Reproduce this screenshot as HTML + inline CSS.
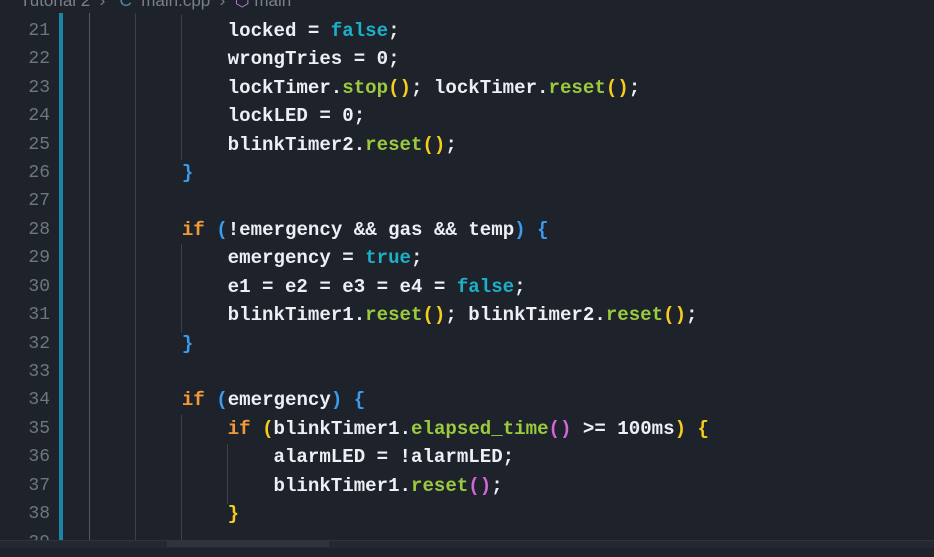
<!DOCTYPE html>
<html><head><meta charset="utf-8"><style>
body{margin:0;width:934px;height:547px;background:#1e222a;overflow:hidden;position:relative;font-family:"Liberation Mono",monospace;}
.ln{position:absolute;left:0;width:50px;text-align:right;color:#6e7681;font-size:18px;height:28.43px;line-height:28.43px;}
.c{position:absolute;left:136px;white-space:pre;color:#eceff4;font-size:19.1px;height:28.43px;line-height:28.43px;font-weight:bold;letter-spacing:0px}
.g{position:absolute;width:1px;background:#3c4048;}
.k{color:#f29a36}.b{color:#1bb0c8}.f{color:#9acb3e}.y{color:#f5cd1a}.p{color:#d266d6}.u{color:#3a9cf0}
</style></head><body>
<div style="position:absolute;top:-9px;left:20px;color:#7a808a;font-family:'Liberation Sans',sans-serif;font-size:17px;white-space:pre">Tutorial 2  ›   <span style="color:#4a8ab0">C</span>  main.cpp  ›  <span style="color:#b180d7">⬡</span> main</div>
<div style="position:absolute;left:59px;top:13px;width:4px;height:527px;background:#1a85a8"></div>
<div class="g" style="left:89px;top:13px;height:527px;background:#55595f"></div>
<div class="g" style="left:135px;top:13px;height:527px"></div>
<div class="g" style="left:181px;top:15px;height:145px"></div>
<div class="g" style="left:181px;top:244px;height:88px"></div>
<div class="g" style="left:181px;top:415px;height:125px"></div>
<div class="g" style="left:227px;top:444px;height:60px"></div>
<div id="L"></div>
<div style="position:absolute;left:0;top:540px;width:934px;height:7px;background:#242830;border-top:1px solid #30353d"></div>
<div style="position:absolute;left:167px;top:541px;width:162px;height:6px;background:#2f343c"></div>
<script>
var lines=[
'        locked = <span class="b">false</span>;',
'        wrongTries = 0;',
'        lockTimer.<span class="f">stop</span><span class="y">()</span>; lockTimer.<span class="f">reset</span><span class="y">()</span>;',
'        lockLED = 0;',
'        blinkTimer2.<span class="f">reset</span><span class="y">()</span>;',
'    <span class="u">}</span>',
'',
'    <span class="k">if</span> <span class="u">(</span>!emergency &amp;&amp; gas &amp;&amp; temp<span class="u">)</span> <span class="u">{</span>',
'        emergency = <span class="b">true</span>;',
'        e1 = e2 = e3 = e4 = <span class="b">false</span>;',
'        blinkTimer1.<span class="f">reset</span><span class="y">()</span>; blinkTimer2.<span class="f">reset</span><span class="y">()</span>;',
'    <span class="u">}</span>',
'',
'    <span class="k">if</span> <span class="u">(</span>emergency<span class="u">)</span> <span class="u">{</span>',
'        <span class="k">if</span> <span class="y">(</span>blinkTimer1.<span class="f">elapsed_time</span><span class="p">()</span> &gt;= 100ms<span class="y">)</span> <span class="y">{</span>',
'            alarmLED = !alarmLED;',
'            blinkTimer1.<span class="f">reset</span><span class="p">()</span>;',
'        <span class="y">}</span>',
''];
var h='';
for(var i=0;i<19;i++){var t=31-14.2+i*28.43;
h+='<div class="ln" style="top:'+t+'px">'+(21+i)+'</div><div class="c" style="top:'+t+'px">'+lines[i]+'</div>';}
document.getElementById('L').innerHTML=h;
</script>
</body></html>
